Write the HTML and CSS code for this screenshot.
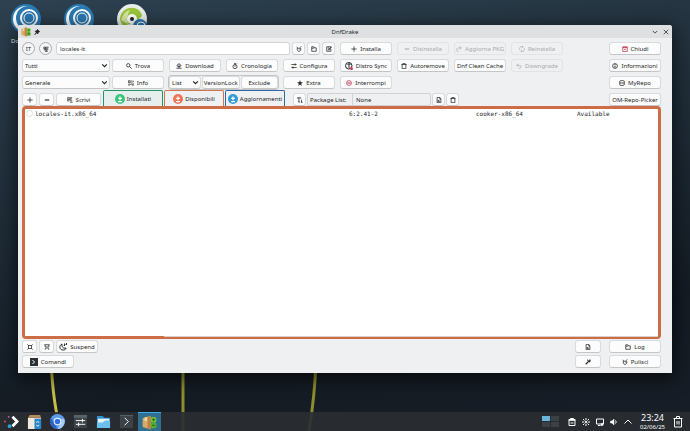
FILE: index.html
```html
<!DOCTYPE html>
<html lang="it">

<head>
    <meta charset="UTF-8">
    <meta name="viewport" content="width=device-width, initial-scale=1.0">
    <title>DnfDrake</title>
    <link rel="stylesheet" href="styles.css">
</head>

<body>
    <!-- icon set -->
    <svg class="sprite" aria-hidden="true">
        <symbol id="search" viewBox="0 0 16 16"><circle cx="6" cy="6" r="4.5"/><path d="M9.5 9.5L15 15"/></symbol>
        <symbol id="info-grid" viewBox="0 0 16 16"><path d="M1 2h5v5H1zM3 10v5M6 10v3M1 13h2M10 1v3M14 2v4M9 6h3M9 10h2v5M14 9v6"/></symbol>
        <symbol id="download" viewBox="0 0 16 16"><path d="M5 5a3 3 0 0 1 6 0c3 0 3 4 0 4H5C2 9 2 5 5 5M1 14h14M8 6v6M6 10l2 2 2-2"/></symbol>
        <symbol id="history" viewBox="0 0 16 16"><circle cx="8" cy="9.500" r="5.500"/><path d="M8 10V6M6 1h5M8 1v3M11 4l2-2"/></symbol>
        <symbol id="configure" viewBox="0 0 16 16"><path d="M1 4h14M1 12h14M11 1v6M5 9v6"/></symbol>
        <symbol id="sync" viewBox="0 0 16 16"><circle cx="7.500" cy="7.500" r="6.500"/><path d="M8 3v9M5 6l3-3 3 3"/><circle class="red-dot" cx="13" cy="13" r="3"/></symbol>
        <symbol id="trash" viewBox="0 0 16 16"><path d="M1 4h14M3 4v11h10V4M5 4V1h6v3"/></symbol>
        <symbol id="bin" viewBox="0 0 20 24"><path d="M1 5h18M3 5v17h14V5M7 5V1h6v4M8 10v7M12 10v7"/></symbol>
        <symbol id="undo" viewBox="0 0 16 16"><path d="M6 2L2 6l4 4M2 6h7c6 0 6 8 0 8H7"/></symbol>
        <symbol id="redo" viewBox="0 0 16 16"><path d="M10 1l4 4-4 4M14 5H7c-7 0-7 10 0 10"/></symbol>
        <symbol id="reload" viewBox="0 0 16 16"><path d="M2 10a6 6 0 0 1 8-8M14 6a6 6 0 0 1-8 8M8 1l3 1-2 3M8 15l-3-1 2-3"/></symbol>
        <symbol id="plus" viewBox="0 0 16 16"><path d="M8 1v14M1 8h14"/></symbol>
        <symbol id="minus" viewBox="0 0 16 16"><path class="thick" d="M2 8h12"/></symbol>
        <symbol id="star" viewBox="0 0 16 16"><path class="star" d="M8 0l2 6h6l-5 4 2 6-5-4-5 4 2-6-5-4h6z"/></symbol>
        <symbol id="stop" viewBox="0 0 16 16"><circle cx="8" cy="8" r="6.500"/><path class="thick" d="M4 8h8"/></symbol>
        <symbol id="close-box" viewBox="0 0 16 16"><path d="M2 2h12v13H2zM2 4h12M6 7l4 4M10 7l-4 4"/></symbol>
        <symbol id="info" viewBox="0 0 16 16"><circle cx="8" cy="8" r="6.500"/><path class="thick" d="M8 7v5M8 3v2"/></symbol>
        <symbol id="repo" viewBox="0 0 16 16"><path d="M2 3c0-2 12-2 12 0v10c0 2-12 2-12 0zM2 8h12"/></symbol>
        <symbol id="folder" viewBox="0 0 16 16"><path d="M2 14V2h5l2 3h5v9zM2 6h4l3-2"/></symbol>
        <symbol id="edit" viewBox="0 0 16 16"><path d="M13 8v6H2V2h11M5 5h3M5 8h2M7 11l1-3 6-6 1 2-6 6z"/></symbol>
        <symbol id="document" viewBox="0 0 16 16"><path d="M3 1h7l3 4v10H3zM10 1v4h3M6 11l4-4M6 8v4h4"/></symbol>
        <symbol id="broom" viewBox="0 0 16 16"><path d="M2 2l3 4M9 6l5-5M3 7c0 10 10 10 10 0M3 7l4-1 4 3M13 7h-3"/></symbol>
        <symbol id="text" viewBox="0 0 16 16"><path d="M1 4V2h9v2M5 2v11M3 13h5M12 7v7M10 14h5"/></symbol>
        <symbol id="script" viewBox="0 0 16 16"><path d="M2 1v10M2 2h12M6 5h7M2 7h8M7 10h7M8 14h7M2 11h3"/></symbol>
        <symbol id="collapse" viewBox="0 0 16 16"><path d="M1 1l4 4M15 1l-4 4M1 15l4-4M15 15l-4-4M4 4h8v8H4z"/></symbol>
        <symbol id="cart" viewBox="0 0 16 16"><path d="M1 2h14M3 2v6h10V2M4 11v3H2M12 11v3h2M6 11h4"/></symbol>
        <symbol id="moon" viewBox="0 0 16 16"><path d="M6 2c-7 3-5 13 3 12 3 0 5-2 5-4-6 2-9-3-8-8M10 2h2l-2 3h2M14 0h2l-2 3h2"/></symbol>
        <symbol id="wand" viewBox="0 0 16 16"><path class="thick" d="M2 14l8-8"/><path class="thick" d="M9 4l4 4M13 1v3M15 5h-3M6 3h2"/></symbol>
        <symbol id="person" viewBox="0 0 16 16"><path d="M2 3h5v4H2zM9 3h6M9 6h5M2 10h12M5 14h8M8 3v11"/></symbol>
        <symbol id="arrow-up" viewBox="0 0 16 16"><path d="M8 4v6M5 7h6M5 12h6"/></symbol>
        <symbol id="chevron-down" viewBox="0 0 16 16"><path d="M2 5l6 6 6-6"/></symbol>
        <symbol id="chevron-up" viewBox="0 0 16 16"><path d="M1 11l7-7 7 7"/></symbol>
        <symbol id="cross" viewBox="0 0 16 16"><path d="M2 2l12 12M14 2L2 14"/></symbol>
        <symbol id="pin" viewBox="0 0 16 16"><path class="solid" d="M9 1l6 6-2 1-2 1-1 4-3-3-5 5 4-6-3-3 4-1z"/></symbol>
        <symbol id="terminal" viewBox="0 0 16 16"><path class="dark-box" d="M0 0h16v16H0z"/><path class="light-line" d="M5 4l4 4-4 4"/></symbol>
        <symbol id="package" viewBox="0 0 24 24">
            <path fill="#d9a968" d="M1 5l13-4v22L1 19z"/><path fill="#b98343" d="M9 2l5-1v22l-5-2z"/><path fill="#f0d6a2" d="M4 4l4-1v7l-4-1z"/>
            <rect x="14" y="3" width="9" height="9" rx="3" fill="#6cc63a"/><rect x="14" y="12" width="9" height="9" rx="3" fill="#58b02a"/>
            <path d="M18.500 5v5M16 7.500h5M16 16.500h5" stroke="#173c0c" stroke-width="1"/>
        </symbol>
        <symbol id="distro" viewBox="0 0 30 30">
            <circle cx="15" cy="15" r="15" fill="#2a7ab3"/><circle cx="15" cy="15" r="13" fill="#fff"/>
            <circle cx="17" cy="14" r="12" fill="#2a7ab3"/><circle cx="18" cy="14" r="8" fill="none" stroke="#fff" stroke-width="2"/>
            <circle cx="18" cy="14" r="5" fill="none" stroke="#fff" stroke-width="1"/>
        </symbol>
    </svg>

    <main class="desktop">
        <svg class="wallpaper" viewBox="0 0 690 431" preserveAspectRatio="none" aria-hidden="true">
            <path d="M51 360Q53 405 61 431"/>
            <path d="M183 360V431"/>
            <path d="M316 360Q315 395 309 431"/>
        </svg>
        <div class="shortcuts">
            <div class="shortcut"><svg><use href="#distro"/></svg><span>Documenti</span></div>
            <div class="shortcut"><svg><use href="#distro"/></svg></div>
            <div class="shortcut">
                <svg viewBox="0 0 30 30">
                    <circle cx="15" cy="15" r="15" fill="#e9eeea"/><path fill="#9bc53b" d="M3 16C3 1 23 0 25 12l-6 6-13 4z"/>
                    <path fill="#d8e8a8" d="M4 16q3-9 9-10-4 6-2 14z"/><circle cx="15" cy="15" r="5" fill="#fff"/><circle cx="15" cy="15" r="2" fill="#222"/>
                    <circle cx="23" cy="22" r="7" fill="#2a7ab3"/><circle cx="24" cy="22" r="4" fill="none" stroke="#fff"/>
                </svg>
            </div>
        </div>

        <section class="window">
            <header class="titlebar">
                <div class="title-left">
                    <svg class="app-icon"><use href="#package"/></svg>
                    <svg class="icon"><use href="#pin"/></svg>
                </div>
                <h1>DnfDrake</h1>
                <div class="title-right">
                    <button class="plain" aria-label="Minimizza"><svg class="icon"><use href="#chevron-down"/></svg></button>
                    <button class="plain" aria-label="Chiudi finestra"><svg class="icon"><use href="#cross"/></svg></button>
                </div>
            </header>

            <div class="content">
                <div class="toolbar">
                    <div class="group search-group">
                        <button class="btn round">IT</button>
                        <button class="btn round" aria-label="Utente"><svg class="icon"><use href="#person"/></svg></button>
                        <input class="field" type="text" value="locales-it" aria-label="Cerca pacchetto">
                        <button class="btn small" aria-label="Pulisci ricerca"><svg class="icon"><use href="#broom"/></svg></button>
                        <button class="btn small" aria-label="Apri"><svg class="icon"><use href="#folder"/></svg></button>
                        <button class="btn small" aria-label="Modifica"><svg class="icon"><use href="#edit"/></svg></button>
                    </div>
                    <button class="btn"><svg class="icon"><use href="#plus"/></svg>Installa</button>
                    <button class="btn" disabled><svg class="icon"><use href="#minus"/></svg>Disinstalla</button>
                    <button class="btn" disabled><svg class="icon"><use href="#redo"/></svg>Aggiorna PKG</button>
                    <button class="btn" disabled><svg class="icon"><use href="#reload"/></svg>Reinstalla</button>
                    <button class="btn last"><svg class="icon red"><use href="#close-box"/></svg>Chiudi</button>

                    <div class="group">
                        <select class="combo" aria-label="Filtro"><option>Tutti</option></select>
                        <button class="btn fixed"><svg class="icon"><use href="#search"/></svg>Trova</button>
                    </div>
                    <button class="btn"><svg class="icon"><use href="#download"/></svg>Download</button>
                    <button class="btn"><svg class="icon"><use href="#history"/></svg>Cronologia</button>
                    <button class="btn"><svg class="icon"><use href="#configure"/></svg>Configura</button>
                    <button class="btn"><svg class="icon big"><use href="#sync"/></svg>Distro Sync</button>
                    <button class="btn"><svg class="icon"><use href="#trash"/></svg>Autoremove</button>
                    <button class="btn">Dnf Clean Cache</button>
                    <button class="btn" disabled><svg class="icon"><use href="#undo"/></svg>Downgrade</button>
                    <button class="btn last"><svg class="icon"><use href="#info"/></svg>Informazioni</button>

                    <div class="group">
                        <select class="combo" aria-label="Categoria"><option>Generale</option></select>
                        <button class="btn fixed"><svg class="icon"><use href="#info-grid"/></svg>Info</button>
                    </div>
                    <div class="group lock-group">
                        <select class="combo" aria-label="Azione"><option>List</option></select>
                        <button class="btn">VersionLock</button>
                        <button class="btn">Exclude</button>
                    </div>
                    <button class="btn"><svg class="icon"><use href="#star"/></svg>Extra</button>
                    <button class="btn"><svg class="icon red"><use href="#stop"/></svg>Interrompi</button>
                    <button class="btn last"><svg class="icon"><use href="#repo"/></svg>MyRepo</button>

                    <div class="group tab-group">
                        <div class="group list-tools">
                            <button class="btn" aria-label="Aggiungi"><svg class="icon"><use href="#plus"/></svg></button>
                            <button class="btn" aria-label="Rimuovi"><svg class="icon"><use href="#minus"/></svg></button>
                            <button class="btn write"><svg class="icon"><use href="#script"/></svg>Scrivi</button>
                        </div>
                        <div class="tabs">
                            <button class="tab green"><svg class="badge"><use href="#arrow-up"/></svg>Installati</button>
                            <button class="tab orange"><svg class="badge"><use href="#arrow-up"/></svg>Disponibili</button>
                            <button class="tab blue"><svg class="badge"><use href="#arrow-up"/></svg>Aggiornamenti</button>
                        </div>
                        <div class="group package-group">
                            <button class="btn small" aria-label="Testo"><svg class="icon"><use href="#text"/></svg></button>
                            <div class="package-list">
                                <label for="package-list">Package List:</label>
                                <input id="package-list" type="text" value="None" readonly>
                            </div>
                            <button class="btn small" aria-label="Apri lista"><svg class="icon"><use href="#document"/></svg></button>
                            <button class="btn small" aria-label="Elimina lista"><svg class="icon"><use href="#trash"/></svg></button>
                        </div>
                    </div>
                    <button class="btn last">OM-Repo-Picker</button>
                </div>

                <div class="results">
                    <table>
                        <tbody>
                            <tr>
                                <td class="pick"><input type="radio" name="package" aria-label="locales-it.x86_64"></td>
                                <td class="name">locales-it.x86_64</td>
                                <td class="version">6:2.41-2</td>
                                <td class="repo">cooker-x86_64</td>
                                <td class="status">Available</td>
                            </tr>
                        </tbody>
                    </table>
                    <div class="scroll"><div class="scroll-thumb"></div></div>
                </div>

                <footer class="actions">
                    <div class="action-row">
                        <button class="btn square" aria-label="Comprimi"><svg class="icon"><use href="#collapse"/></svg></button>
                        <button class="btn square" aria-label="Carrello"><svg class="icon"><use href="#cart"/></svg></button>
                        <button class="btn suspend"><svg class="icon big"><use href="#moon"/></svg>Suspend</button>
                        <button class="btn tool" aria-label="Documento"><svg class="icon"><use href="#document"/></svg></button>
                        <button class="btn fixed"><svg class="icon"><use href="#folder"/></svg>Log</button>
                    </div>
                    <div class="action-row">
                        <button class="btn fixed"><svg class="icon big"><use href="#terminal"/></svg>Comandi</button>
                        <button class="btn tool" aria-label="Bacchetta"><svg class="icon"><use href="#wand"/></svg></button>
                        <button class="btn fixed"><svg class="icon"><use href="#broom"/></svg>Pulisci</button>
                    </div>
                </footer>
            </div>
        </section>
    </main>

    <nav class="taskbar">
        <div class="tasks">
            <button class="task" aria-label="Menu"><svg viewBox="0 0 16 16">
                <path d="M9 3l5 5-5 5" fill="none" stroke="#fff" stroke-width="3"/><circle cx="5" cy="3" r="1" fill="#d05ac0"/><circle cx="1" cy="8" r="1" fill="#e0506a"/><circle cx="6" cy="13" r="2" fill="#2fa5d8"/>
            </svg></button>
            <button class="task" aria-label="Software"><svg viewBox="0 0 16 16">
                <path fill="#efe9e0" d="M1 4h14v12H1z"/><path fill="#b98a5c" d="M1 4l2-3h11l1 3z"/><path fill="#2b86c8" d="M8 5h7v11H8z"/><path d="M10 9a2 2 0 0 1 3 0M13 12a2 2 0 0 1-3 0" fill="none" stroke="#fff"/>
            </svg></button>
            <button class="task" aria-label="Browser"><svg viewBox="0 0 16 16">
                <circle cx="8" cy="8" r="8" fill="#5b9bea"/><path fill="#2d62c4" d="M1 4l5 8 2 4A8 8 0 0 1 1 4"/><path fill="#a9cbf8" d="M8 16l4-7V5h3a8 8 0 0 1-7 11"/><circle cx="8" cy="8" r="4" fill="#fff"/><circle cx="8" cy="8" r="3" fill="#2f6fe0"/>
            </svg></button>
            <button class="task" aria-label="Impostazioni"><svg viewBox="0 0 16 16">
                <path fill="#3b4248" d="M1 1h14v14H1z"/><path fill="#59636b" d="M1 1h14v3H1z"/><path d="M3 7h10M3 11h10M10 5v4M6 9v4" stroke="#fff"/>
            </svg></button>
            <button class="task" aria-label="File"><svg viewBox="0 0 16 16">
                <path fill="#2f93cf" d="M1 2h6l2 2h6v11H1z"/><path fill="#e6f3fb" d="M2 5h12v5H2z"/><path fill="#6cc0ee" d="M1 9h6l3-2h5v8H1z"/>
            </svg></button>
            <button class="task" aria-label="Terminale"><svg viewBox="0 0 16 16">
                <path fill="#3b4248" d="M1 1h14v14H1z"/><path fill="#59636b" d="M1 1h14v1H1z"/><path d="M6 4l4 4-4 4" fill="none" stroke="#fff"/>
            </svg></button>
            <button class="task active" aria-label="DnfDrake"><svg><use href="#package"/></svg></button>
        </div>
        <div class="tray">
            <div class="pager"><i class="current"></i><i></i><i></i><i></i></div>
            <svg class="tray-icon" viewBox="0 0 16 16"><path d="M2 3h12v12H2zM5 1h6v3H5z"/><path class="bar" d="M2 3h12v2H2z"/><path d="M5 10h6"/></svg>
            <svg class="tray-icon" viewBox="0 0 16 16"><circle class="bar" cx="8" cy="8" r="2"/><path d="M8 0v4M8 12v4M0 8h4M12 8h4M2 2l3 3M11 11l3 3M14 2l-3 3M5 11l-3 3"/></svg>
            <svg class="tray-icon" viewBox="0 0 16 16"><path d="M1 2h14v10H1zM4 15h5"/><path class="bar" d="M10 11h4v4h-4z"/></svg>
            <svg class="tray-icon" viewBox="0 0 16 16"><path class="bar" d="M1 6h3l4-4v12l-4-4H1z"/><path d="M11 5q3 3 0 6"/></svg>
            <svg class="tray-icon" viewBox="0 0 16 16"><use href="#chevron-up"/></svg>
            <time class="clock" datetime="2025-06-02T23:24"><span>23:24</span><small>02/06/25</small></time>
            <svg class="tray-icon bin"><use href="#bin"/></svg>
        </div>
    </nav>
</body>

</html>
```
FILE: styles.css
```css
* {
    box-sizing: border-box;
}

body {
    margin: 0;
    min-height: 100vh;
    display: flex;
    flex-direction: column;
    background: linear-gradient(170deg, #2d4150 0%, #22313d 30%, #141b23 75%, #171e27 100%);
    font-family: "Noto Sans", "Open Sans", sans-serif;
    font-size: 6px;
    line-height: 8px;
    color: #232629;
}

button,
input,
select {
    font: inherit;
    color: inherit;
    margin: 0;
    min-width: 0;
}

.sprite {
    position: absolute;
    width: 0;
    height: 0;
}

.desktop {
    flex: 1;
    display: flex;
    padding: 25px 18px 39px;
}

.wallpaper {
    position: absolute;
    inset: 0;
    width: 100%;
    height: 100%;
    fill: none;
    stroke: #8f8d2f;
    stroke-width: 3;
}

.wallpaper path:first-child {
    stroke: #c5bf48;
}

/* shortcuts lie on the desktop, under the window */
.shortcuts {
    position: absolute;
    top: 4px;
    left: 11px;
    display: flex;
    gap: 23px;
    color: #fcfcfc;
}

.shortcut {
    width: 30px;
    display: flex;
    flex-direction: column;
    gap: 3px;
}

.shortcut svg {
    width: 30px;
    height: 30px;
}

.window {
    position: relative;
    flex: 1;
    display: flex;
    flex-direction: column;
    background-color: #eff0f1;
    border-radius: 3px 3px 0 0;
    box-shadow: 0 4px 18px 2px rgba(0, 0, 0, 0.6);
}

.titlebar {
    height: 13px;
    padding: 0 3px;
    display: grid;
    grid-template-columns: 1fr auto 1fr;
    align-items: center;
    background-color: #dee0e2;
    border-radius: 3px 3px 0 0;
}

.titlebar h1 {
    margin: 0;
    font-size: 6px;
    font-weight: 400;
}

.title-left,
.title-right {
    display: flex;
    align-items: center;
    gap: 5px;
}

.title-left {
    gap: 3px;
}

.title-right {
    justify-content: flex-end;
}

.app-icon {
    width: 10px;
    height: 10px;
}

.plain {
    display: flex;
    padding: 0;
    border: 0;
    background: none;
}

.icon {
    width: 6px;
    height: 6px;
    flex: none;
    fill: none;
    stroke: currentColor;
    stroke-width: 2;
}

.icon.big {
    width: 8px;
    height: 8px;
}

.icon.red {
    color: #b8324a;
}

.thick {
    stroke-width: 3;
}

.solid {
    fill: currentColor;
}

.star {
    fill: currentColor;
    stroke: none;
}

.red-dot {
    fill: #da3650;
    stroke: none;
}

.dark-box {
    fill: #2c3136;
    stroke: none;
}

.light-line {
    stroke: #fff;
}

.content {
    flex: 1;
    display: flex;
    flex-direction: column;
    padding: 4px 11px 5px 4px;
}

.toolbar {
    display: grid;
    grid-template-columns: 142fr repeat(7, 52fr) 36fr 52fr;
    grid-auto-rows: 13px;
    gap: 4px 5px;
}

.group {
    display: flex;
    gap: 2px;
}

.search-group {
    grid-column: span 4;
}

.lock-group {
    grid-column: span 2;
    gap: 1px;
    border-radius: 2px;
    outline: 1px solid #c3c5c7;
}

.lock-group .combo {
    flex: 0 0 32px;
}

.lock-group .btn {
    flex: 1;
}

.tab-group {
    grid-column: span 9;
    gap: 0;
}

.last {
    grid-column: 10;
}

.btn {
    height: 13px;
    padding: 0;
    display: flex;
    align-items: center;
    justify-content: center;
    gap: 3px;
    white-space: nowrap;
    background-color: #fcfcfc;
    border: 1px solid #d8dadb;
    border-bottom-color: #c3c5c7;
    border-radius: 3px;
}

.btn:disabled {
    color: #a9abad;
    background-color: #eff0f1;
    border-color: #e1e3e4;
}

.round {
    width: 13px;
    flex: none;
    margin-right: 2px;
    border-color: #a9abad;
    border-radius: 50%;
    background-color: #f5f6f6;
}

.small {
    width: 13px;
    flex: none;
}

.fixed {
    width: 52px;
    flex: none;
}

.field {
    flex: 1;
    padding: 0 3px;
    background-color: #fff;
    border: 1px solid #d0d2d4;
    border-radius: 3px;
}

.combo {
    flex: 1;
    padding: 0 2px;
    appearance: none;
    background: #fcfcfc url("data:image/svg+xml,%3Csvg xmlns='http://www.w3.org/2000/svg' viewBox='0 0 6 6'%3E%3Cpath d='M1 2l2 2 2-2' fill='none' stroke='%23232629'/%3E%3C/svg%3E") no-repeat right 1px center / 7px 7px;
    border: 1px solid #d8dadb;
    border-bottom-color: #c3c5c7;
    border-radius: 3px;
}

.list-tools {
    width: 79px;
}

.list-tools .btn {
    width: 15px;
}

.list-tools .write {
    flex: 1;
}

.tabs {
    display: flex;
    gap: 1px;
    margin: -3px 8px 0 2px;
}

.tab {
    width: 60px;
    height: 16px;
    padding: 0;
    display: flex;
    align-items: center;
    justify-content: center;
    gap: 2px;
    white-space: nowrap;
    background-color: #eff0f1;
    border: 1px solid;
    border-bottom: 0;
    border-radius: 2px 2px 0 0;
}

.badge {
    width: 10px;
    height: 10px;
    flex: none;
    border-radius: 50%;
    fill: none;
    stroke: #fff;
    stroke-width: 2;
}

.green {
    background-color: #e6eeee;
    border-color: #209566;
}

.green .badge {
    background-color: #3cc47c;
}

.orange {
    border-color: #d2744c;
}

.orange .badge {
    background-color: #ee7657;
}

.blue {
    border-color: #2b68a5;
}

.blue .badge {
    background-color: #349bd6;
}

.package-group {
    gap: 1px;
}

.package-list {
    width: 124px;
    display: flex;
    align-items: center;
    border: 1px solid #d0d2d4;
    border-radius: 2px;
}

.package-list label {
    width: 44px;
    padding-left: 2px;
    white-space: nowrap;
}

.package-list input {
    flex: 1;
    height: 11px;
    padding: 0 3px;
    background: none;
    border: 0;
    border-left: 1px solid #d0d2d4;
}

.results {
    flex: 1;
    display: flex;
    flex-direction: column;
    justify-content: space-between;
    background-color: #fff;
    border: 3px solid #cd6d46;
    border-bottom-width: 2px;
    border-radius: 4px;
}

.results table {
    width: 100%;
    table-layout: fixed;
    border-collapse: collapse;
    font-family: "DejaVu Sans Mono", "Liberation Mono", monospace;
}

.results td {
    height: 9px;
    padding: 0;
    white-space: nowrap;
}

.pick {
    width: 10px;
}

.pick input {
    display: block;
    width: 7px;
    height: 7px;
    margin-left: 1px;
    appearance: none;
    border: 1px solid #dcdedf;
    border-radius: 50%;
}

.version {
    width: 127px;
}

.repo {
    width: 101px;
}

.status {
    width: 81px;
}

.scroll {
    height: 1px;
    background-color: #d9cfca;
}

.scroll-thumb {
    width: 22%;
    height: 1px;
    background-color: #cd6d46;
}

.actions {
    display: flex;
    flex-direction: column;
    gap: 2px;
    padding-top: 1px;
}

.action-row {
    display: flex;
    gap: 2px;
}

.square {
    width: 15px;
}

.suspend {
    width: 42px;
}

.tool {
    width: 26px;
    margin-left: auto;
    margin-right: 6px;
}

.taskbar {
    position: relative;
    height: 19px;
    display: flex;
    justify-content: space-between;
    background-color: rgba(42, 46, 50, 0.9);
    color: #fcfcfc;
}

.tasks,
.tray {
    display: flex;
    align-items: center;
}

.task {
    width: 23px;
    height: 19px;
    padding: 0;
    display: flex;
    align-items: center;
    justify-content: center;
    background: none;
    border: 0;
}

.task svg {
    width: 15px;
    height: 15px;
}

.active {
    background-color: #2f6f92;
    border-top: 1px solid #3daee9;
}

.tray {
    gap: 6px;
    padding-right: 7px;
}

.pager {
    width: 17px;
    margin-right: 3px;
    display: grid;
    grid-template-columns: 1fr 1fr;
    grid-auto-rows: 5px;
    gap: 1px;
}

.pager i {
    background-color: #3c4146;
}

.pager .current {
    background-color: #69b5dc;
}

.tray-icon {
    width: 8px;
    height: 8px;
    fill: none;
    stroke: currentColor;
    stroke-width: 2;
}

.tray-icon .bar {
    fill: currentColor;
    stroke-width: 1;
}

.bin {
    width: 10px;
    height: 12px;
}

.clock {
    width: 29px;
    display: flex;
    flex-direction: column;
    align-items: center;
    font-size: 9px;
    line-height: 10px;
}

.clock small {
    font-size: 6px;
    line-height: 8px;
}
```
